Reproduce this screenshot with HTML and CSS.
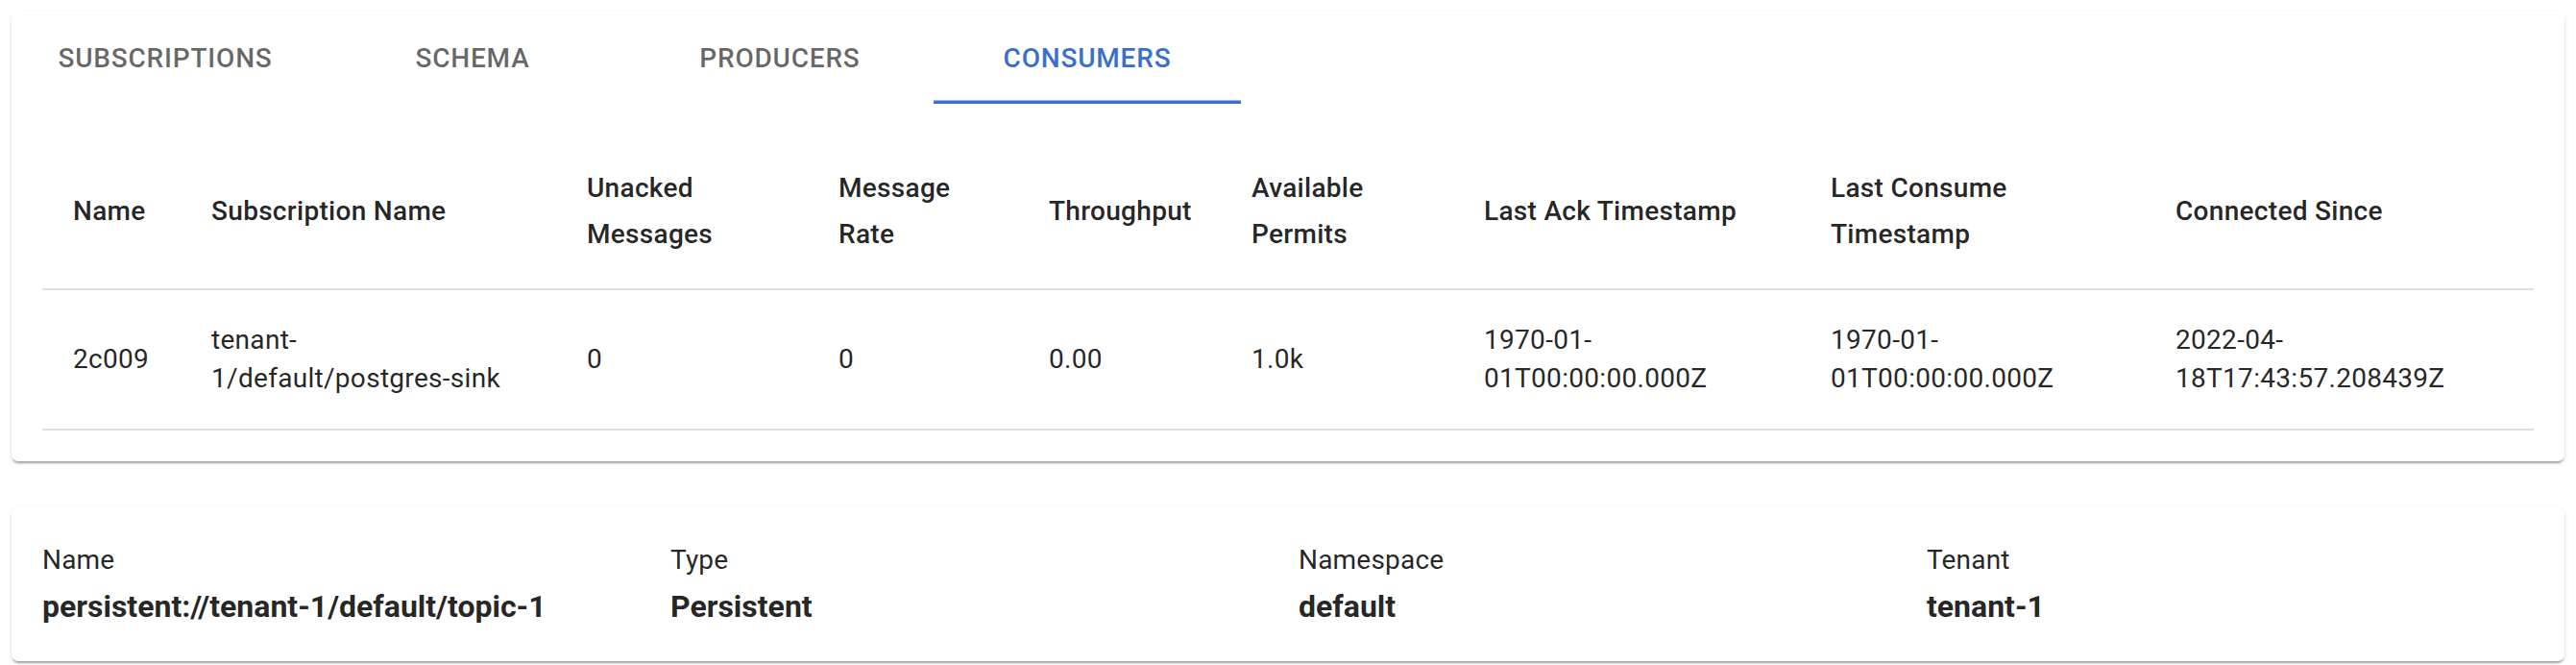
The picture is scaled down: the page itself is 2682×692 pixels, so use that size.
FILE: index.html
```html
<!DOCTYPE html>
<html lang="en">
<head>
<meta charset="utf-8">
<title>Topic consumers</title>
<link rel="stylesheet" href="styles.css">
</head>
<body>
<div class="page">
  <section class="card tabs-card">
    <nav class="tabs">
      <div class="tab">Subscriptions</div>
      <div class="tab">Schema</div>
      <div class="tab">Producers</div>
      <div class="tab active">Consumers</div>
    </nav>
    <div class="table-wrap">
      <table class="consumers">
        <thead>
          <tr>
            <th class="c-name">Name</th>
            <th class="c-sub">Subscription Name</th>
            <th class="c-unacked">Unacked<br>Messages</th>
            <th class="c-rate">Message<br>Rate</th>
            <th class="c-tp">Throughput</th>
            <th class="c-permits">Available<br>Permits</th>
            <th class="c-ack">Last Ack Timestamp</th>
            <th class="c-consume">Last Consume<br>Timestamp</th>
            <th class="c-since">Connected Since</th>
          </tr>
        </thead>
        <tbody>
          <tr>
            <td>2c009</td>
            <td>tenant-<br>1/default/postgres-sink</td>
            <td>0</td>
            <td>0</td>
            <td>0.00</td>
            <td>1.0k</td>
            <td>1970-01-<br>01T00:00:00.000Z</td>
            <td>1970-01-<br>01T00:00:00.000Z</td>
            <td>2022-04-<br>18T17:43:57.208439Z</td>
          </tr>
        </tbody>
      </table>
    </div>
  </section>

  <section class="card info-card">
    <div class="info-grid">
      <div class="info-item">
        <div class="info-label">Name</div>
        <div class="info-value">persistent://tenant-1/default/topic-1</div>
      </div>
      <div class="info-item">
        <div class="info-label">Type</div>
        <div class="info-value">Persistent</div>
      </div>
      <div class="info-item">
        <div class="info-label">Namespace</div>
        <div class="info-value">default</div>
      </div>
      <div class="info-item">
        <div class="info-label">Tenant</div>
        <div class="info-value">tenant-1</div>
      </div>
    </div>
  </section>
</div>
</body>
</html>
```

FILE: styles.css
```css
* { box-sizing: border-box; }

html, body {
  margin: 0;
  background: #ffffff;
}

body {
  font-family: Roboto, "Liberation Sans", Arial, sans-serif;
  color: rgba(0, 0, 0, 0.87);
}

.page {
  padding: 12px;
  display: flex;
  flex-direction: column;
  gap: 48px;
}

.card {
  background: #fff;
  border-radius: 7px;
  box-shadow: 0 4px 2px -2px rgba(0, 0, 0, 0.2),
              0 2px 2px 0 rgba(0, 0, 0, 0.14),
              0 2px 6px 0 rgba(0, 0, 0, 0.08);
}

/* Tabs */
.tabs {
  display: flex;
  height: 96px;
}

.tab {
  width: 320px;
  height: 96px;
  display: flex;
  align-items: center;
  justify-content: center;
  font-size: 28px;
  font-weight: 500;
  letter-spacing: 0.8px;
  text-transform: uppercase;
  color: rgba(0, 0, 0, 0.6);
}

.tab.active {
  color: #3a70cc;
  box-shadow: inset 0 -3.5px 0 #3a70cc;
}

/* Table */
.table-wrap {
  padding: 32px;
}

.consumers {
  width: 100%;
  border-collapse: collapse;
  table-layout: fixed;
}

.consumers th,
.consumers td {
  text-align: left;
  font-size: 28px;
  letter-spacing: 0.3px;
  border-bottom: 2px solid #e0e0e0;
  vertical-align: middle;
  padding: 32px 16px 32px 32px;
}

.consumers th {
  font-weight: 500;
  line-height: 48px;
}

.consumers td {
  font-weight: 400;
  line-height: 40px;
}

.c-name { width: 144px; }
.c-sub { width: 391px; }
.c-unacked { width: 262px; }
.c-rate { width: 219px; }
.c-tp { width: 211px; }
.c-permits { width: 242px; }
.c-ack { width: 361px; }
.c-consume { width: 359px; }
.c-since { width: auto; }

/* Info card */
.info-card {
  padding: 32px;
}

.info-grid {
  display: grid;
  grid-template-columns: repeat(4, 1fr);
  column-gap: 22px;
}

.info-label {
  font-size: 28px;
  line-height: 46px;
  letter-spacing: 0.2px;
  color: rgba(0, 0, 0, 0.87);
}

.info-value {
  font-size: 32px;
  line-height: 50px;
  font-weight: 700;
  color: rgba(0, 0, 0, 0.87);
}
```
